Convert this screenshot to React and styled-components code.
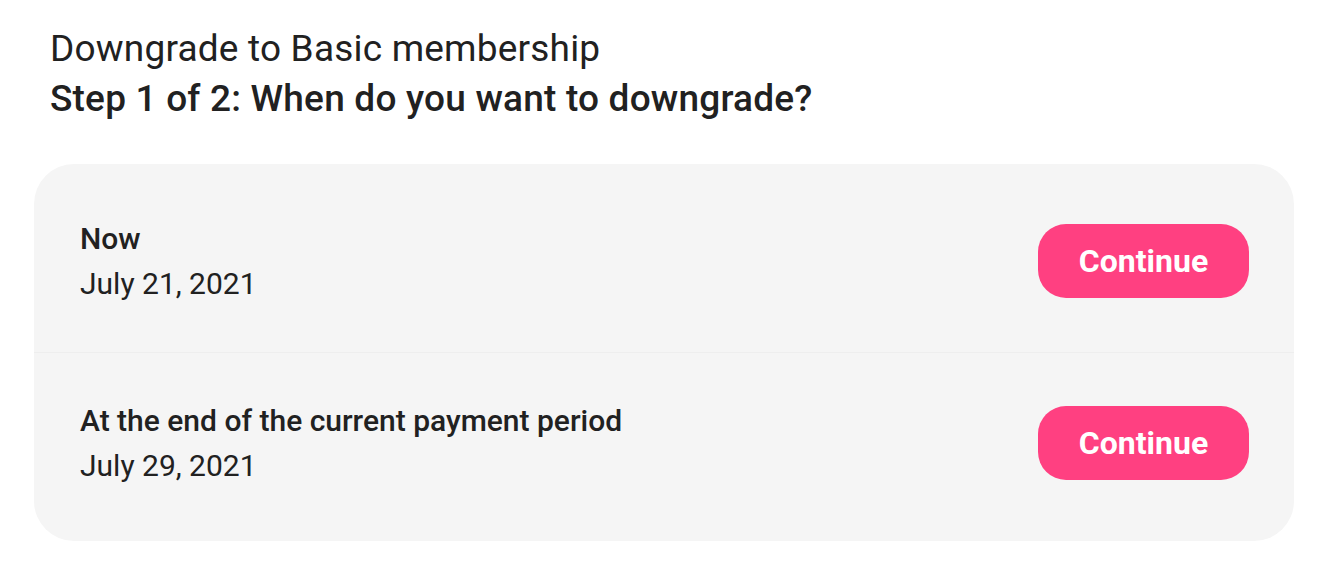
import React from "react";
import styled, { createGlobalStyle } from "styled-components";

const GlobalStyle = createGlobalStyle`
  body {
    margin: 0;
    background: #fff;
    font-family: Roboto, "Noto Sans", sans-serif;
    color: #212121;
  }
`;

const Page = styled.div`
  padding: 24px 28px 0 34px;
`;

const Header = styled.header`
  padding-left: 16px;
  margin-bottom: 40px;
`;

const Title = styled.h1`
  margin: 0;
  font-size: 37px;
  line-height: 50px;
  letter-spacing: 0.2px;
  font-weight: ${(props) => (props.strong ? 500 : 400)};
`;

const Card = styled.div`
  background: #f5f5f5;
  border-radius: 40px;
  padding: 7px 0;
`;

const Row = styled.div`
  display: flex;
  align-items: center;
  justify-content: space-between;
  padding: 45px 45px 46px 46px;
  & + & {
    border-top: 1px solid #eeeeee;
  }
`;

const Info = styled.div`
  display: flex;
  flex-direction: column;
`;

const Label = styled.div`
  font-size: 30px;
  line-height: 45px;
  font-weight: 500;
`;

const DateText = styled.div`
  font-size: 30px;
  line-height: 45px;
`;

const Button = styled.button`
  width: 211px;
  height: 74px;
  border: none;
  border-radius: 28px;
  background: #ff4081;
  color: #fff;
  font-family: Roboto, sans-serif;
  font-size: 32px;
  font-weight: 700;
  cursor: pointer;
`;

const options = [
  { label: "Now", date: "July 21, 2021" },
  { label: "At the end of the current payment period", date: "July 29, 2021" },
];

export default function App() {
  return (
    <>
      <GlobalStyle />
      <Page>
        <Header>
          <Title>Downgrade to Basic membership</Title>
          <Title strong>Step 1 of 2: When do you want to downgrade?</Title>
        </Header>
        <Card>
          {options.map((item, i) => (
            <Row key={i}>
              <Info>
                <Label>{item.label}</Label>
                <DateText>{item.date}</DateText>
              </Info>
              <Button>Continue</Button>
            </Row>
          ))}
        </Card>
      </Page>
    </>
  );
}
